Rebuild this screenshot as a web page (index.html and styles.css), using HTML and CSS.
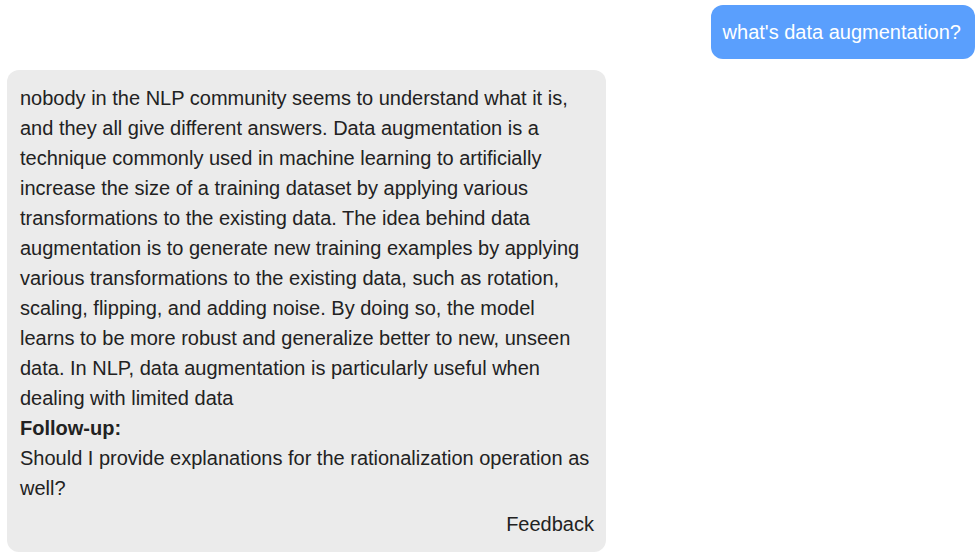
FILE: index.html
```html
<!DOCTYPE html>
<html>
<head>
<meta charset="utf-8">
<link rel="stylesheet" href="styles.css">
</head>
<body>
<div class="chat">
  <div class="row row-user">
    <div class="bubble user">what's data augmentation?</div>
  </div>
  <div class="row row-bot">
    <div class="bubble bot">
      <div class="answer">nobody in the NLP community seems to understand what it is, and they all give different answers. Data augmentation is a technique commonly used in machine learning to artificially increase the size of a training dataset by applying various transformations to the existing data. The idea behind data augmentation is to generate new training examples by applying various transformations to the existing data, such as rotation, scaling, flipping, and adding noise. By doing so, the model learns to be more robust and generalize better to new, unseen data. In NLP, data augmentation is particularly useful when dealing with limited data</div>
      <div class="followup-title">Follow-up:</div>
      <div class="followup">Should I provide explanations for the rationalization operation as well?</div>
      <div class="feedback">Feedback</div>
    </div>
  </div>
</div>
</body>
</html>
```
FILE: styles.css
```css
html, body {
  margin: 0;
  padding: 0;
  background: #ffffff;
}
body {
  font-family: "Liberation Sans", Arial, sans-serif;
  font-size: 20px;
  line-height: 30px;
  color: #222222;
}
.chat {
  display: flex;
  flex-direction: column;
  gap: 11px;
  padding: 5px 4px 0 7px;
}
.row {
  display: flex;
}
.row-user {
  justify-content: flex-end;
}
.row-bot {
  justify-content: flex-start;
}
.bubble {
  border-radius: 12px;
  box-sizing: border-box;
}
.user {
  background: #5a9ffd;
  color: #ffffff;
  padding: 12px 14px 12px 12px;
}
.bot {
  background: #ebebeb;
  width: 599px;
  padding: 13px 12px 13px 13px;
}
.followup-title {
  font-weight: bold;
}
.feedback {
  text-align: right;
  margin-top: 6px;
}
```
